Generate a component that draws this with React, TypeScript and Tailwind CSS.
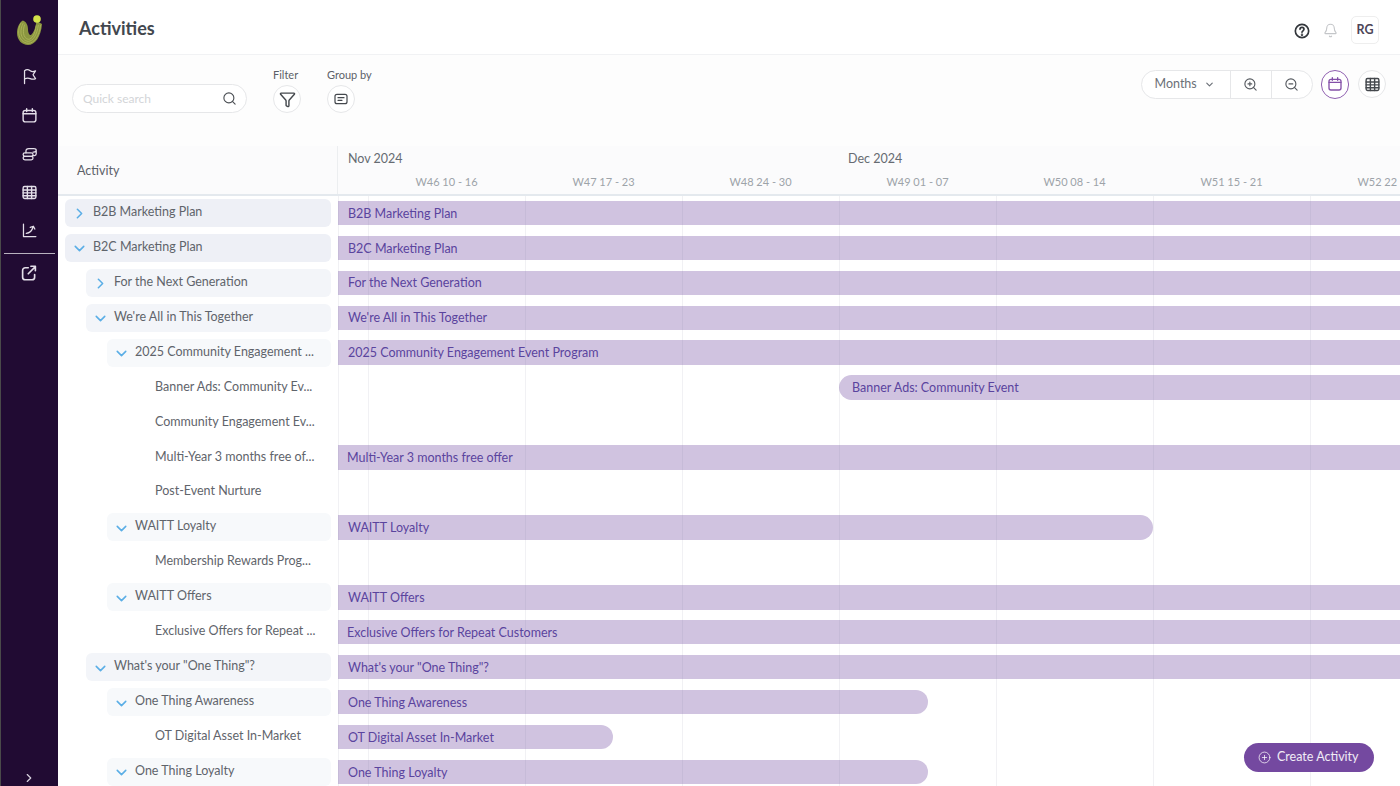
import React from "react";
import { ChevronDown, ChevronRight, Search, Funnel, ZoomIn, ZoomOut, CirclePlus, Bell } from "lucide-react";

type Row = { label: string; level: number; open?: boolean; leaf?: boolean; bar?: string; offset?: number; width?: number; tight?: boolean };

const rows: Row[] = [
  { label: "B2B Marketing Plan", level: 0, open: false, bar: "B2B Marketing Plan" },
  { label: "B2C Marketing Plan", level: 0, open: true, bar: "B2C Marketing Plan" },
  { label: "For the Next Generation", level: 1, open: false, bar: "For the Next Generation" },
  { label: "We're All in This Together", level: 1, open: true, bar: "We're All in This Together" },
  { label: "2025 Community Engagement ...", level: 2, open: true, bar: "2025 Community Engagement Event Program" },
  { label: "Banner Ads: Community Ev...", level: 3, leaf: true, bar: "Banner Ads: Community Event", offset: 501 },
  { label: "Community Engagement Ev...", level: 3, leaf: true },
  { label: "Multi-Year 3 months free of...", level: 3, leaf: true, bar: "Multi-Year 3 months free offer", tight: true },
  { label: "Post-Event Nurture", level: 3, leaf: true },
  { label: "WAITT Loyalty", level: 2, open: true, bar: "WAITT Loyalty", width: 815 },
  { label: "Membership Rewards Prog...", level: 3, leaf: true },
  { label: "WAITT Offers", level: 2, open: true, bar: "WAITT Offers" },
  { label: "Exclusive Offers for Repeat ...", level: 3, leaf: true, bar: "Exclusive Offers for Repeat Customers", tight: true },
  { label: "What's your \"One Thing\"?", level: 1, open: true, bar: "What's your \"One Thing\"?" },
  { label: "One Thing Awareness", level: 2, open: true, bar: "One Thing Awareness", width: 590 },
  { label: "OT Digital Asset In-Market", level: 3, leaf: true, bar: "OT Digital Asset In-Market", width: 275 },
  { label: "One Thing Loyalty", level: 2, open: true, bar: "One Thing Loyalty", width: 590 },
];

const weeks = ["W46 10 - 16", "W47 17 - 23", "W48 24 - 30", "W49 01 - 07", "W50 08 - 14", "W51 15 - 21", "W52 22 - 28"];

const levelBox: Record<number, string> = {
  0: "ml-[7px] bg-[#eef0f6]",
  1: "ml-[28px] bg-[#f3f5f9]",
  2: "ml-[49px] bg-[#f7f9fb]",
  3: "ml-[49px]",
};

function Ico({ children, size = 18, sw = 1.8, className = "" }: { children: React.ReactNode; size?: number; sw?: number; className?: string }) {
  return (
    <svg width={size} height={size} viewBox="0 0 24 24" fill="none" stroke="currentColor" strokeWidth={sw} strokeLinecap="round" strokeLinejoin="round" className={className}>
      {children}
    </svg>
  );
}

const CalIcon = ({ size = 18, sw = 2 }: { size?: number; sw?: number }) => (
  <Ico size={size} sw={sw}>
    <rect x="3" y="5" width="18" height="16" rx="3" />
    <path d="M8 2.500v4M16 2.500v4M3 9.500h18" />
  </Ico>
);
const TableIcon = ({ size = 18, sw = 2 }: { size?: number; sw?: number }) => (
  <Ico size={size} sw={sw}>
    <rect x="3" y="3.500" width="18" height="17" rx="2" />
    <path d="M3 8.500h18M3 12.500h18M3 16.500h18M9 3.500v17M15 3.500v17" />
  </Ico>
);

function Logo() {
  return (
    <svg width="30" height="34" viewBox="15 14 30 34">
      <path
        d="M22.700 20.500C19 23 17 28 17 33c0 7 5 12 11 12 7 0 13-8 14-21l-5.500-3c-1 7-3 12-5.500 14-1.500.500-3-2-3-6 0-4-2-8-5.800-8.500Z"
        fill="#8b9640"
      />
      <g fill="none" stroke="#b0b95c" strokeWidth="0.800" strokeLinecap="round">
        <path d="M21 23c-2 3-2.500 7-2.300 10.500.5 5 4.500 9.800 9.800 9.800 5.500 0 11-7 12-18" />
        <path d="M23 23.500c-1.500 3-2.300 6-2 10 .5 4 3.500 7.800 7.300 7.800 4.500 0 8.700-6 10-16" />
        <path d="M24.500 25c-1 3-1.300 5.500-1 8.500.5 3 2.500 5.800 5 5.800 3.500 0 6.500-5 7.700-13.500" />
      </g>
      <circle cx="37" cy="19" r="3.800" fill="#d4e34a" />
    </svg>
  );
}

function SideIcon({ children }: { children: React.ReactNode }) {
  return <div className="h-[38.500px] pr-[1px] flex items-center justify-center text-[#e4dfe9]">{children}</div>;
}

export default function App() {
  return (
    <div className="h-screen w-full overflow-hidden flex bg-white text-[#5c6168]" style={{ fontFamily: "Lato, 'Noto Sans', sans-serif" }}>
      {/* Sidebar */}
      <aside className="w-[58px] shrink-0 bg-[#210b33] border-l border-[#4a4a4a] flex flex-col relative">
        <div className="h-[57.500px] pt-[14px] flex justify-center"><Logo /></div>
        <div className="flex flex-col">
          <SideIcon>
            <Ico size={17}><path d="M5 22V4c3-2.500 6-1.500 8 0s5 1.500 7.500 0L17 9.500l3.500 5.500c-3 1.500-5 1-7.500 0s-5-1-8 .5" /></Ico>
          </SideIcon>
          <SideIcon><CalIcon size={17} /></SideIcon>
          <SideIcon>
            <Ico size={17}>
              <rect x="3" y="11" width="14" height="5" rx="2.500" />
              <rect x="3" y="16" width="14" height="5" rx="2.500" />
              <path d="M7 11V8.500C7 6 9 5 11 5h7c2 0 3.500 1 3.500 2.500S20 10 18 10h-1M17 15h2c1.500 0 2.500-1 2.500-2.500V8" />
            </Ico>
          </SideIcon>
          <SideIcon><TableIcon size={17} /></SideIcon>
          <SideIcon>
            <Ico size={17}><path d="M3.500 3v17.500H21M7.500 16c5-.5 8-3.500 9.500-9M13 7.500l4.500-1.500 2 4" /></Ico>
          </SideIcon>
        </div>
        <div className="mx-[3px] mt-[3px] h-px bg-[#b8b2bf]" />
        <SideIcon>
          <Ico size={18} sw={2.200}><path d="M11 5H7a3.500 3.500 0 0 0-3.500 3.500v9A3.500 3.500 0 0 0 7 21h9a3.500 3.500 0 0 0 3.500-3.500V14M11 13 20.500 3.500M14.500 3h6v6" /></Ico>
        </SideIcon>
        <div className="mt-auto flex justify-center pr-[1px] h-[15px] text-[#d8d2de]">
          <ChevronRight size={14} strokeWidth={2} />
        </div>
      </aside>

      {/* Main */}
      <main className="flex-1 min-w-0 flex flex-col">
        <header className="h-[55px] shrink-0 border-b border-[#f1f2f4] flex items-start pl-[21px] pr-[21px] bg-white">
          <h1 className="text-[18px] font-bold text-[#42474e] leading-[56px]">Activities</h1>
          <div className="ml-auto flex items-center mt-[16px]">
            <svg width="16" height="16" viewBox="0 0 24 24" fill="none" stroke="#33373c" strokeWidth="2.500" strokeLinecap="round" className="mt-[2px]">
              <circle cx="12" cy="12" r="10" />
              <path d="M9 9.500a3 3 0 0 1 6 0c0 2-3 2.500-3 4.500" />
              <circle cx="12" cy="17.500" r="0.600" />
            </svg>
            <Bell size={15} strokeWidth={1.800} className="ml-[13px] mt-[1px] text-[#c4c6c9]" />
            <div className="ml-[13px] w-[28px] h-[28px] rounded-[5px] border border-[#eeeeee] flex items-center justify-center text-[12.500px] font-bold text-[#4d4558] bg-white">RG</div>
          </div>
        </header>

        {/* Toolbar */}
        <div className="h-[91px] shrink-0 bg-[#fdfdfd] flex pl-[14px] pr-[14px]">
          <div className="mt-[29px] w-[175px] h-[29px] rounded-full border border-[#e6e7e9] bg-white flex items-center pl-[10px] pr-[9px]">
            <span className="text-[12px] text-[#d3d5d8]">Quick search</span>
            <Search size={15} strokeWidth={1.800} className="ml-auto text-[#4b4f54]" />
          </div>
          <div className="ml-[26px] mt-[13px] flex flex-col items-start w-[28px]">
            <span className="text-[11px] leading-[13px] text-[#5c6168] whitespace-nowrap">Filter</span>
            <div className="mt-[4px] w-[28px] h-[28px] rounded-full border border-[#e6e7e9] bg-white flex items-center justify-center">
              <Funnel size={17} strokeWidth={2} className="text-[#44484d]" />
            </div>
          </div>
          <div className="ml-[26px] mt-[13px] flex flex-col items-start w-[28px]">
            <span className="text-[11px] leading-[13px] text-[#5c6168] whitespace-nowrap">Group by</span>
            <div className="mt-[4px] w-[28px] h-[28px] rounded-full border border-[#e6e7e9] bg-white flex items-center justify-center text-[#44484d]">
              <Ico size={16}><rect x="3" y="5" width="18" height="14" rx="3" /><path d="M7.500 10h9M7.500 14h6" /></Ico>
            </div>
          </div>
          <div className="ml-auto mt-[15px] flex items-start">
            <div className="h-[28.500px] w-[172px] rounded-full border border-[#e6e7e9] bg-white flex items-center text-[#6b7077]">
              <div className="w-[89px] h-full flex items-center pl-[13px] pt-[1px] border-r border-[#e6e7e9] text-[12.500px]">
                Months <ChevronDown size={11} strokeWidth={2.500} className="ml-[7px]" />
              </div>
              <div className="w-[41px] h-full flex items-center justify-center border-r border-[#e6e7e9] text-[#55595f]"><ZoomIn size={15} strokeWidth={1.800} /></div>
              <div className="flex-1 h-full flex items-center justify-center text-[#55595f]"><ZoomOut size={15} strokeWidth={1.800} /></div>
            </div>
            <div className="ml-[8px] w-[28.500px] h-[28.500px] rounded-full border border-[#8f5fb0] bg-white flex items-center justify-center text-[#8450a8]"><CalIcon size={16} /></div>
            <div className="ml-[9px] w-[28px] h-[28px] rounded-full border border-[#e6e7e9] bg-white flex items-center justify-center text-[#44484d]"><TableIcon size={17} /></div>
          </div>
        </div>

        {/* Gantt header */}
        <div className="h-[49.500px] shrink-0 flex bg-[#fbfbfc] border-b-2 border-[#e4e9ee]">
          <div className="w-[280px] shrink-0 border-r border-[#eceef0] pl-[19px] pt-[17px] text-[12.500px] leading-[16px] text-[#5c6168]">Activity</div>
          <div className="flex-1 min-w-0 overflow-hidden">
            <div className="flex h-[21px] pt-[5px] text-[12.500px] leading-[16px] text-[#666b72]">
              <span className="ml-[10px] w-[490px] shrink-0 whitespace-nowrap">Nov 2024</span>
              <span className="ml-[10px] whitespace-nowrap">Dec 2024</span>
            </div>
            <div className="flex pl-[30px] text-[11px] leading-[16px] pt-[7px] text-[#9da3a9]">
              {weeks.map((w) => (
                <span key={w} className="w-[157px] shrink-0 text-center whitespace-nowrap">{w}</span>
              ))}
            </div>
          </div>
        </div>

        {/* Rows */}
        <div className="flex-1 min-h-0 overflow-hidden relative">
          {rows.map((r, i) => (
            <div key={i} className="h-[34.950px] flex items-center">
              <div className="w-[280px] shrink-0 pr-[7px]">
                <div className={`h-[28px] flex rounded-[6px] ${levelBox[r.level]}`}>
                  <div className={`w-[28px] shrink-0 flex items-center justify-center text-[#5aaee6] ${r.leaf ? "invisible" : ""}`}>
                    {!r.leaf && (r.open ? <ChevronDown size={17} strokeWidth={2.200} className="mt-[2px]" /> : <ChevronRight size={17} strokeWidth={2.200} className="mt-[2px]" />)}
                  </div>
                  <span className={`text-[12.500px] leading-[26px] whitespace-nowrap text-[#5f646b] ${r.leaf ? "ml-[20px]" : ""}`}>{r.label}</span>
                </div>
              </div>
              <div className="flex-1 min-w-0 h-full flex items-center">
                {r.bar && (
                  <div
                    className={`h-[24.500px] bg-[#d0c3e0] flex items-center pt-[2px] text-[12.500px] text-[#5a449e] whitespace-nowrap ${r.offset ? "pl-[13px] rounded-l-full" : r.tight ? "pl-[9px]" : "pl-[10px]"} ${r.width ? "rounded-r-full" : ""}`}
                    style={{ marginLeft: r.offset ?? 0, width: r.width ?? `calc(100% - ${r.offset ?? 0}px)` }}
                  >
                    {r.bar}
                  </div>
                )}
              </div>
            </div>
          ))}
          {/* vertical lines over the chart */}
          {[280, 310, 467, 624, 781, 938, 1095, 1252].map((x) => (
            <div key={x} className="absolute top-0 bottom-0 w-px bg-[#7a7a90]/10 pointer-events-none" style={{ left: x }} />
          ))}
          <button className="absolute left-[1186px] top-[547.500px] h-[29px] w-[130px] rounded-full bg-[#7449a0] text-white/90 flex items-center pl-[14px] text-[12.500px]">
            <CirclePlus size={13} strokeWidth={1.500} className="mr-[6px]" />
            Create Activity
          </button>
        </div>
      </main>
    </div>
  );
}
